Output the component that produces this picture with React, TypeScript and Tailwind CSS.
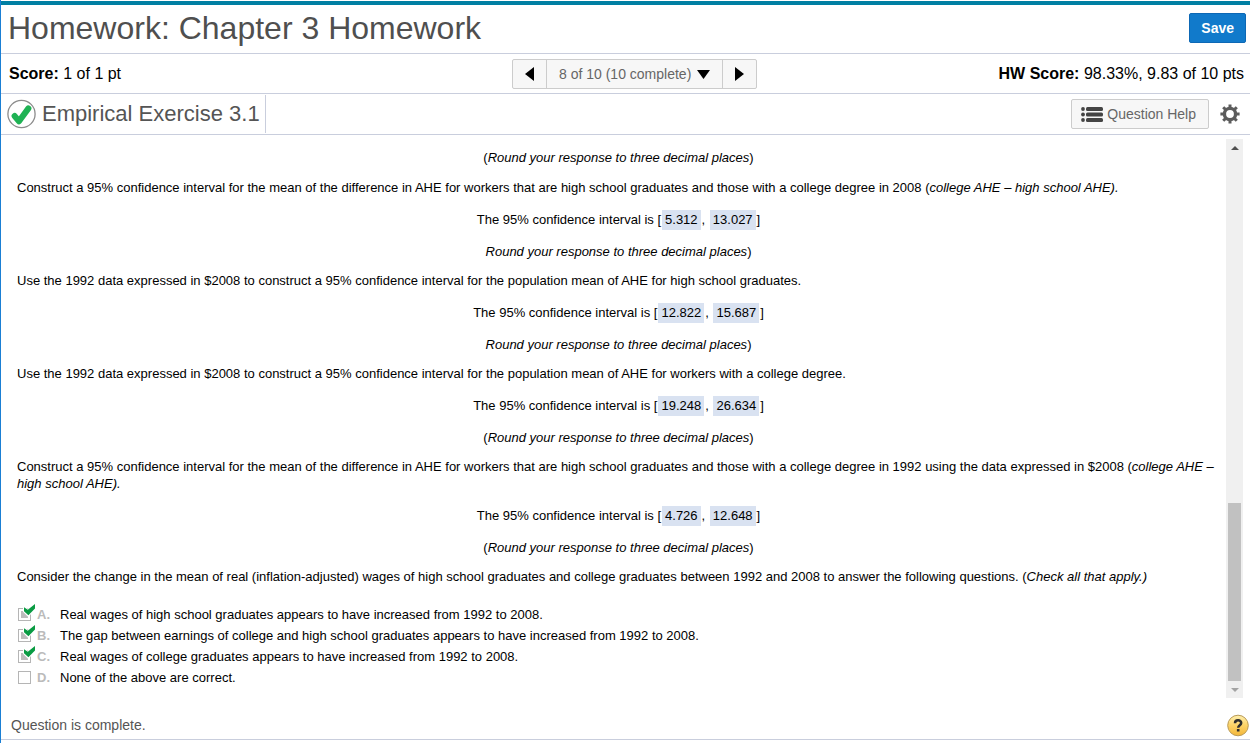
import React from "react";

type Interval = { question: React.ReactNode; low: string; high: string; hint: React.ReactNode };

const hintText = "Round your response to three decimal places";

const intervals: Interval[] = [
  {
    question: (
      <>
        Construct a 95% confidence interval for the mean of the difference in AHE for workers that are high school
        graduates and those with a college degree in 2008 (<i>college AHE – high school AHE).</i>
      </>
    ),
    low: "5.312",
    high: "13.027",
    hint: <><i>{hintText}</i>)</>,
  },
  {
    question:
      "Use the 1992 data expressed in $2008 to construct a 95% confidence interval for the population mean of AHE for high school graduates.",
    low: "12.822",
    high: "15.687",
    hint: <><i>{hintText}</i>)</>,
  },
  {
    question:
      "Use the 1992 data expressed in $2008 to construct a 95% confidence interval for the population mean of AHE for workers with a college degree.",
    low: "19.248",
    high: "26.634",
    hint: <>(<i>{hintText}</i>)</>,
  },
  {
    question: (
      <>
        Construct a 95% confidence interval for the mean of the difference in AHE for workers that are high school
        graduates and those with a college degree in 1992 using the data expressed in $2008 (
        <i>college AHE – </i><i>high school AHE).</i>
      </>
    ),
    low: "4.726",
    high: "12.648",
    hint: <>(<i>{hintText}</i>)</>,
  },
];

const choices = [
  { letter: "A", text: "Real wages of high school graduates appears to have increased from 1992 to 2008.", checked: true },
  { letter: "B", text: "The gap between earnings of college and high school graduates appears to have increased from 1992 to 2008.", checked: true },
  { letter: "C", text: "Real wages of college graduates appears to have increased from 1992 to 2008.", checked: true },
  { letter: "D", text: "None of the above are correct.", checked: false },
];

function Answer({ value }: { value: string }) {
  return <span className="mx-px inline-block bg-[#d9e2f1] px-[3px] leading-5">{value}</span>;
}

function CorrectBadge() {
  return (
    <svg width="29" height="30" viewBox="0 0 29 30" role="img" aria-label="Correct">
      <circle cx="14.5" cy="15" r="13.6" fill="#fff" stroke="#8c8c8c" strokeWidth="1.3" />
      <path d="M7.6 17L12 22.2L21.4 9.4" fill="none" stroke="#1fb254" strokeWidth="6" strokeLinecap="round" strokeLinejoin="round" />
    </svg>
  );
}

function Gear() {
  return (
    <svg width="20" height="20" viewBox="0 0 20 20" fill="none" stroke="#5c5c5c" aria-hidden="true">
      <circle cx="10" cy="10" r="5.6" strokeWidth="3.4" />
      <path
        d="M10 0.4V4M10 16V19.6M0.4 10H4M16 10H19.6M3.2 3.2L5.8 5.8M14.2 14.2L16.8 16.8M3.2 16.8L5.8 14.2M14.2 5.8L16.8 3.2"
        strokeWidth="3"
      />
    </svg>
  );
}

function ListIcon() {
  return (
    <svg width="22" height="15" viewBox="0 0 22 15" fill="#444" aria-hidden="true">
      <circle cx="2" cy="2" r="1.9" />
      <circle cx="2" cy="7.5" r="1.9" />
      <circle cx="2" cy="13" r="1.9" />
      <rect x="5" y="0" width="17" height="4" rx="1.5" />
      <rect x="5" y="5.5" width="17" height="4" rx="1.5" />
      <rect x="5" y="11" width="17" height="4" rx="1.5" />
    </svg>
  );
}

function HelpIcon() {
  return (
    <svg width="22" height="23" viewBox="0 0 22 23" aria-hidden="true">
      <defs>
        <linearGradient id="help" x1="0" y1="0" x2="0" y2="1">
          <stop offset="0" stopColor="#fff0b0" />
          <stop offset="0.5" stopColor="#fbd266" />
          <stop offset="1" stopColor="#f3b63a" />
        </linearGradient>
      </defs>
      <circle cx="11" cy="11.5" r="10.3" fill="url(#help)" stroke="#b99a55" />
      <path d="M8 9.2C8 5.4 14.2 5.4 14.2 9.1C14.2 11.3 11.2 11.3 11.2 13.8" fill="none" stroke="#2e2e2e" strokeWidth="2.5" />
      <rect x="9.9" y="15" width="2.6" height="2.5" fill="#2e2e2e" />
    </svg>
  );
}

export default function App() {
  return (
    <div className="flex min-h-screen flex-col border-l border-[#1a7fd4] bg-white pt-px font-['Liberation_Sans',Arial,sans-serif] text-black">
      <header className="flex h-[53px] items-center justify-between border-t-4 border-b border-t-[#007fa3] border-b-[#c9cedd] pr-1 pb-0.5 pl-[7px]">
        <h1 className="text-[32px] leading-9 text-[#4f4f4f]">Homework: Chapter 3 Homework</h1>
        <button type="button" className="h-[30px] rounded-xs border border-[#0d68b5] bg-[#117acb] px-[11px] text-sm font-bold text-white">
          Save
        </button>
      </header>

      <section className="grid h-10 grid-cols-[1fr_auto_1fr] items-center border-b border-[#c9cedd] pr-1.5 pl-2 text-base">
        <p><b>Score:</b> 1 of 1 pt</p>
        <nav aria-label="Questions" className="ml-4 flex h-[30px] rounded-xs border border-[#ccc] bg-[#f7f7f7]">
          <button type="button" aria-label="Previous question" className="flex w-[34px] items-center justify-center border-r border-[#ccc]">
            <svg width="9" height="14" viewBox="0 0 9 14" aria-hidden="true"><path d="M9 0V14L0 7Z" /></svg>
          </button>
          <div className="relative flex items-center">
            <select aria-label="Question" className="h-full appearance-none pr-[30px] pl-3 text-sm text-[#666]">
              <option>8 of 10 (10 complete)</option>
            </select>
            <svg className="pointer-events-none absolute top-2.5 right-3" width="13" height="9" viewBox="0 0 13 9" aria-hidden="true"><path d="M0 0H13L6.5 9Z" /></svg>
          </div>
          <button type="button" aria-label="Next question" className="flex w-[34px] items-center justify-center border-l border-[#ccc]">
            <svg width="9" height="14" viewBox="0 0 9 14" aria-hidden="true"><path d="M0 0V14L9 7Z" /></svg>
          </button>
        </nav>
        <p className="text-right"><b>HW Score:</b> 98.33%, 9.83 of 10 pts</p>
      </section>

      <section className="flex h-[41px] items-center justify-between border-b border-[#c9cedd] pr-2.5 pl-1.5">
        <div className="flex h-[38px] items-center gap-1.5 border-r border-[#c9cedd] pr-[5px]">
          <CorrectBadge />
          <h2 className="text-[22px] leading-7 text-[#555]">Empirical Exercise 3.1</h2>
        </div>
        <div className="flex items-center gap-[11px]">
          <button type="button" className="flex h-[30px] items-center gap-1 rounded-xs border border-[#ccc] bg-[#f7f7f7] pr-3 pl-[9px] text-sm text-[#666]">
            <ListIcon />
            Question Help
          </button>
          <button type="button" aria-label="Settings"><Gear /></button>
        </div>
      </section>

      <main className="mt-1 flex flex-1 pr-[7px]">
        <div className="flex-1 pt-2.5 pr-1.5 pl-4 text-[13px] leading-[17px]">
          <p className="mb-[13px] text-center">(<i>{hintText}</i>)</p>
          {intervals.map((item) => (
            <section key={item.low}>
              <p>{item.question}</p>
              <p className="mt-3.5 mb-[13px] text-center leading-5">
                The 95% confidence interval is [<Answer value={item.low} />, <Answer value={item.high} />]
              </p>
              <p className="mb-3 text-center">{item.hint}</p>
            </section>
          ))}
          <fieldset>
            <legend className="mb-[19px]">
              Consider the change in the mean of real (inflation-adjusted) wages of high school graduates and college
              graduates between 1992 and 2008 to answer the following questions. (<i>Check all that apply.)</i>
            </legend>
            {choices.map((choice) => (
              <label key={choice.letter} className="flex h-[21px] items-center">
                <span className="relative flex w-5 items-center pl-px">
                  <input
                    type="checkbox"
                    defaultChecked={choice.checked}
                    className="size-[13px] appearance-none border border-[#b5b5b5] bg-white bg-clip-content p-0.5 checked:bg-[#bcbcbc]"
                  />
                  {choice.checked && (
                    <svg className="absolute -top-1 left-1.5" width="14" height="15" viewBox="0 0 14 15" aria-hidden="true">
                      <path d="M1 3.6L4.8 6.2L12 0.4V4L5.2 11.2L1 7Z" fill="#fff" stroke="#fff" strokeWidth="2.4" />
                      <path d="M1 3.2L4.8 5.8L12 0V4.4L5.4 11.2L1 7.2Z" fill="#0a9b43" />
                    </svg>
                  )}
                </span>
                <b className="w-[23px] text-[#bbb]">{choice.letter}.</b>
                <span>{choice.text}</span>
              </label>
            ))}
          </fieldset>
        </div>

        <div aria-hidden="true" className="flex w-[17px] flex-col items-center bg-[#f0f0f0]">
          <span className="flex h-[17px] items-center">
            <svg width="8" height="4" viewBox="0 0 8 4"><path d="M0 4L4 0L8 4Z" fill="#505050" /></svg>
          </span>
          <span className="flex-1" />
          <span className="h-[178px] w-[13px] bg-[#c1c1c1]" />
          <span className="flex h-[17px] items-center">
            <svg width="8" height="4" viewBox="0 0 8 4"><path d="M0 0L4 4L8 0Z" fill="#a3a3a3" /></svg>
          </span>
        </div>
      </main>

      <footer className="mb-[3px] flex h-[42px] items-end justify-between border-b border-[#c9cedd] pr-px pb-0.5 pl-2.5">
        <p className="pb-0.5 text-sm text-[#555]">Question is complete.</p>
        <button type="button" aria-label="Help"><HelpIcon /></button>
      </footer>
    </div>
  );
}
